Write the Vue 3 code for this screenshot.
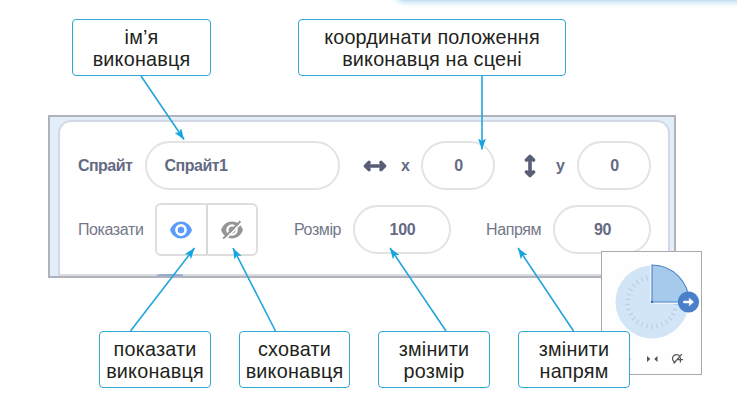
<script setup>
const callouts = [
  { id: 'name', lines: ['ім’я', 'виконавця'] },
  { id: 'coords', lines: ['координати положення', 'виконавця на сцені'] },
  { id: 'show', lines: ['показати', 'виконавця'] },
  { id: 'hide', lines: ['сховати', 'виконавця'] },
  { id: 'size', lines: ['змінити', 'розмір'] },
  { id: 'direction', lines: ['змінити', 'напрям'] },
]
const arrows = [
  { x1: 141, y1: 76, x2: 184, y2: 139.5 },
  { x1: 482, y1: 76, x2: 482, y2: 149.5 },
  { x1: 130.5, y1: 331, x2: 194.5, y2: 248 },
  { x1: 275.5, y1: 331, x2: 233, y2: 248 },
  { x1: 446, y1: 331, x2: 390, y2: 248 },
  { x1: 573.5, y1: 331, x2: 518, y2: 248 },
]
const ticks = Array.from({ length: 30 }, (_, i) => i * 12).filter((a) => a > 95)
</script>

<template>
  <main class="page">
    <div class="ribbon"></div>

    <section class="panel">
      <div class="card">
        <div class="row row-top">
          <span class="label strong">Спрайт</span>
          <div class="field name">Спрайт1</div>
          <svg class="icon-h" width="24" height="14" viewBox="0 0 24 14">
            <path d="M3 7H21M6 3.5L2.5 7L6 10.5M18 3.5L21.5 7L18 10.5" />
          </svg>
          <span class="axis axis-x">x</span>
          <div class="field coord">0</div>
          <svg class="icon-v" width="14" height="24" viewBox="0 0 14 24">
            <path d="M7 3V21M3.5 6L7 2.5L10.5 6M3.5 18L7 21.5L10.5 18" />
          </svg>
          <span class="axis axis-y">y</span>
          <div class="field coord">0</div>
        </div>

        <div class="row row-bottom">
          <span class="label show">Показати</span>
          <div class="toggle">
            <div class="half">
              <svg width="22" height="18" viewBox="0 0 22 18">
                <path d="M0 9C2.2 3.4 6.2 .5 11 .5S19.8 3.4 22 9C19.8 14.6 15.8 17.5 11 17.5S2.2 14.6 0 9Z" fill="#5b9bfb" />
                <circle cx="11" cy="9" r="4.6" fill="#5b9bfb" stroke="#fff" stroke-width="2.6" />
              </svg>
            </div>
            <div class="half">
              <svg width="22" height="20" viewBox="0 0 22 20">
                <path d="M0 10C2.2 4.4 6.2 1.6 11 1.6S19.8 4.4 22 10C19.8 15.6 15.8 18.4 11 18.4S2.2 15.6 0 10Z" fill="#959595" />
                <circle cx="11" cy="10" r="4.6" fill="#959595" stroke="#fff" stroke-width="2.4" />
                <path d="M3.6 20L20.8 2.6" stroke="#fff" stroke-width="1.6" />
                <path d="M2.2 18.6L19.4 1.2" stroke="#959595" stroke-width="2" />
              </svg>
            </div>
          </div>
          <span class="label size">Розмір</span>
          <div class="field wide">100</div>
          <span class="label dir">Напрям</span>
          <div class="field wide">90</div>
        </div>
        <div class="tab-hint"></div>
      </div>
    </section>

    <aside class="dial">
      <svg width="99" height="122" viewBox="602 252 99 122">
        <circle cx="652" cy="302" r="36.5" fill="#d2e5f7" />
        <g stroke="#b4cbe2" stroke-width="1">
          <path v-for="a in ticks" :key="a" d="M652 275V280" :transform="`rotate(${a} 652 302)`" />
        </g>
        <path d="M651 266V303H688" fill="none" stroke="#eef6fd" stroke-width="2" />
        <path d="M652 302V265A37 37 0 0 1 689 302Z" fill="#a6caec" stroke="#5283c5" stroke-width="1.1" />
        <circle cx="652" cy="302" r="1.3" fill="#3e72b8" />
        <circle cx="688.5" cy="302" r="10.6" fill="#4a7fc9" />
        <path d="M684.3 302H690" stroke="#fff" stroke-width="2.6" stroke-linecap="round" />
        <path d="M689.3 298.2L693.6 302L689.3 305.8Z" fill="#fff" stroke="#fff" stroke-width=".6" stroke-linejoin="round" />
        <path d="M647 356L650.3 359L647 362ZM657.5 356L654.2 359L657.5 362Z" fill="#555" />
        <path d="M629 358.2L631 359L629 360Z" fill="#555" />
        <g fill="none" stroke="#555" stroke-width="1.2">
          <path d="M679.6 356A4 4 0 1 0 675.5 362.4" />
          <path d="M673.6 363.5L681.8 354.2M677.5 359.6H683M680.4 357.2V362.4" />
        </g>
      </svg>
    </aside>

    <div v-for="c in callouts" :key="c.id" class="callout" :class="c.id">
      <span v-for="line in c.lines" :key="line">{{ line }}</span>
    </div>

    <svg class="arrows" width="737" height="412" viewBox="0 0 737 412">
      <defs>
        <marker id="tip" markerUnits="userSpaceOnUse" markerWidth="12" markerHeight="10" refX="11" refY="4" orient="auto">
          <path d="M0 0L11 4L0 8L2.6 4Z" fill="#14a4e0" />
        </marker>
      </defs>
      <line v-for="(a, i) in arrows" :key="i" v-bind="a" marker-end="url(#tip)" />
    </svg>
  </main>
</template>

<style>
body {
  background: #fff;
}
</style>

<style scoped>
.page {
  position: relative;
  box-sizing: border-box;
  width: 737px;
  height: 412px;
  padding: 115px 0 0 48px;
  overflow: hidden;
  background: #fff;
  font-family: "Liberation Sans", Arial, sans-serif;
}
.ribbon {
  position: absolute;
  left: 395px;
  top: -20px;
  width: 380px;
  height: 21px;
  border-radius: 10px;
  background: #c3e1f2;
  box-shadow: 0 0 5px 2px #c3e1f2;
}
.panel {
  box-sizing: border-box;
  width: 628px;
  height: 163px;
  padding: 3px 4px 0 8px;
  border: 2px solid #b0b3ba;
  background: #e3eefb;
}
.card {
  box-sizing: border-box;
  position: relative;
  height: 156px;
  padding: 19px 0 0 18px;
  border: 2px solid #d3d9e4;
  border-bottom: 2px solid #d9dbe1;
  border-radius: 13px 13px 0 0;
  background: #fff;
}
.tab-hint {
  position: absolute;
  left: 97px;
  bottom: -2px;
  width: 26px;
  height: 2px;
  border-radius: 50% 50% 0 0;
  background: #8fa9d4;
}
.row {
  display: flex;
  align-items: center;
  color: #646a83;
  font-size: 16px;
  white-space: nowrap;
}
.row-top {
  height: 49px;
}
.row-bottom {
  height: 53px;
  margin-top: 13px;
}
.label {
  flex: none;
  color: #737889;
  letter-spacing: -0.4px;
}
.label.strong {
  width: 67px;
  color: #646a83;
  font-weight: 700;
  letter-spacing: -0.55px;
}
.label.show {
  width: 77px;
}
.label.size {
  width: 59px;
  margin-left: 36px;
}
.label.dir {
  width: 67px;
  margin-left: 35px;
}
.field {
  box-sizing: border-box;
  flex: none;
  display: flex;
  align-items: center;
  justify-content: center;
  height: 49px;
  padding-left: 1px;
  border: 2px solid #e3e3e5;
  border-radius: 25px;
  font-weight: 700;
  letter-spacing: -0.3px;
}
.field.name {
  width: 195px;
  justify-content: flex-start;
  padding-left: 17.5px;
  letter-spacing: -0.5px;
}
.field.coord {
  width: 74px;
}
.field.wide {
  width: 98px;
}
.icon-h,
.icon-v {
  flex: none;
  fill: none;
  stroke: #575e75;
  stroke-width: 3.6;
  stroke-linecap: round;
  stroke-linejoin: round;
}
.icon-h {
  margin-left: 23px;
}
.icon-v {
  margin-left: 28px;
}
.axis {
  flex: none;
  font-weight: 700;
}
.axis-x {
  width: 20px;
  margin-left: 14px;
}
.axis-y {
  width: 21px;
  margin-left: 19px;
}
.toggle {
  box-sizing: border-box;
  flex: none;
  display: flex;
  width: 103px;
  height: 53px;
  border: 2px solid #dededf;
  border-radius: 6px;
}
.half {
  flex: 1;
  display: flex;
  align-items: center;
  justify-content: center;
}
.half + .half {
  border-left: 2px solid #d8d8da;
}
.dial {
  position: absolute;
  left: 601px;
  top: 251px;
  width: 99px;
  height: 122px;
  border: 1px solid #a9a9ab;
  background: #fefefe;
}
.dial svg {
  display: block;
  overflow: visible;
}
.callout {
  position: absolute;
  box-sizing: border-box;
  display: flex;
  flex-direction: column;
  align-items: center;
  height: 57px;
  padding-top: 6px;
  border: 1px solid #30a8d2;
  border-radius: 4px;
  background: #fff;
  color: #231f20;
  font-size: 19.8px;
  line-height: 22px;
  letter-spacing: 0.2px;
  white-space: nowrap;
}
.callout.name {
  left: 72px;
  top: 19px;
  width: 139px;
}
.callout.coords {
  left: 298px;
  top: 19px;
  width: 268px;
}
.callout.show {
  left: 99px;
  top: 331px;
  width: 112px;
}
.callout.hide {
  left: 239px;
  top: 331px;
  width: 111px;
}
.callout.size {
  left: 378px;
  top: 331px;
  width: 112px;
}
.callout.direction {
  left: 518px;
  top: 331px;
  width: 112px;
}
.arrows {
  position: absolute;
  left: 0;
  top: 0;
  pointer-events: none;
}
.arrows line {
  stroke: #21a5dc;
  stroke-width: 1.6;
}
</style>
